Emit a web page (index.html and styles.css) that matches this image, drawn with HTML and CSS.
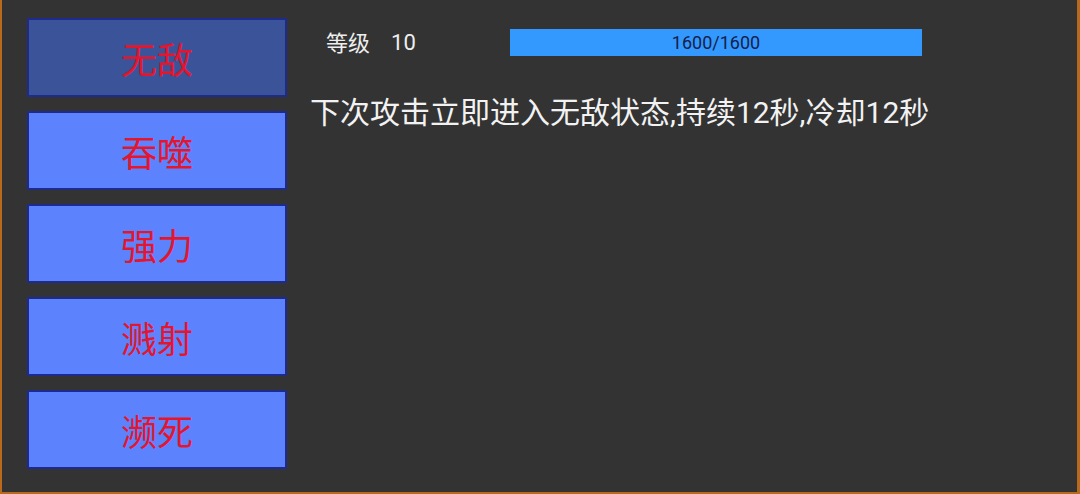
FILE: index.html
```html
<!DOCTYPE html>
<html lang="zh-CN">
<head>
  <meta charset="utf-8">
  <title>技能</title>
  <link rel="stylesheet" href="styles.css">
</head>
<body>

<div class="screen">
  <!-- 技能列表 -->
  <div class="skills">
    <div class="skill active">无敌</div>
    <div class="skill">吞噬</div>
    <div class="skill">强力</div>
    <div class="skill">溅射</div>
    <div class="skill">濒死</div>
  </div>

  <!-- 技能详情 -->
  <div class="detail">
    <div class="levelRow">
      <span class="levelLabel">等级</span>
      <span class="levelValue">10</span>
      <div class="expBar">1600/1600</div>
    </div>
    <div class="desc">下次攻击立即进入无敌状态,持续12秒,冷却12秒</div>
  </div>
</div>

</body>
</html>
```

FILE: styles.css
```css
/* 基本样式 */
body {
  margin: 0;
  padding: 0;
  background-color: #333;
  font-family: Roboto, "Noto Sans CJK SC", sans-serif;
}

.screen {
  box-sizing: border-box;
  height: 494px;
  display: flex;
  padding: 18px 0 0 25px;
  background-color: #333;
  border-left: 2px solid #b8691c;
  border-right: 3px solid #b8691c;
  border-bottom: 2px solid #b8691c;
}

.skills {
  display: flex;
  flex-direction: column;
  gap: 14px;
  width: 260px;
}

.skill {
  box-sizing: border-box;
  height: 79px;
  display: flex;
  align-items: center;
  justify-content: center;
  background-color: #5c82fe;
  border: 2px solid #1d2a8e;
  color: #e3162e;
  font-size: 36px;
}

.skill.active {
  background-color: #3a5399; /* 选中状态 */
}

.detail {
  margin-left: 23px;
}

.levelRow {
  display: flex;
  align-items: center;
  margin-top: 11px;
  height: 27px;
}

.levelLabel {
  margin-left: 16px;
  margin-bottom: 4px; /* 中文字略微上移，与数字对齐 */
  color: #eee;
  font-size: 22px;
}

.levelValue {
  margin-left: 21px;
  width: 119px;
  color: #eee;
  font-size: 22px;
}

.expBar {
  width: 412px;
  height: 27px;
  line-height: 27px;
  text-align: center;
  background-color: #3399ff;
  color: #14214a;
  font-size: 18px;
}

.desc {
  margin-top: 37px;
  color: #f2f2f2;
  font-size: 30px;
  line-height: 40px;
}
```
